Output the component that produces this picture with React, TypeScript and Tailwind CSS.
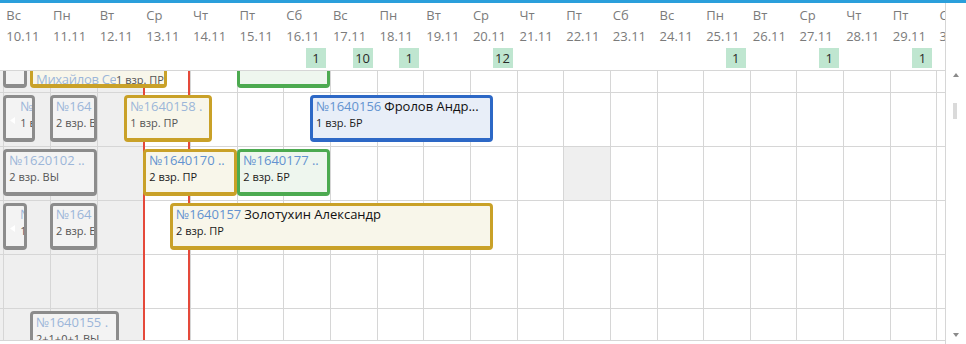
import React from 'react';

const dayNames = ['Вс', 'Пн', 'Вт', 'Ср', 'Чт', 'Пт', 'Сб'];

const columns = Array.from({ length: 21 }, (_, i) => ({
  day: dayNames[i % 7],
  date: `${10 + i}.11`,
}));

const badges: Record<number, string> = { 6: '1', 7: '10', 8: '1', 10: '12', 15: '1', 17: '1', 19: '1' };

const tones = {
  gray: 'border-[#8c8c8c] bg-[#f3f3f3]',
  gold: 'border-[#c9a128] bg-[#f8f6ea]',
  green: 'border-[#4caa50] bg-[#eef6ee]',
  blue: 'border-[#2d68c6] bg-[#e8eef8]',
};

type Booking = {
  row: number;
  left: number;
  width: number;
  tone: keyof typeof tones;
  faded?: boolean;
  num?: string;
  name?: string;
  sub?: string;
  indent?: number;
  arrow?: boolean;
  inline?: boolean;
};

const bookings: Booking[] = [
  { row: 0, left: 3.3, width: 23.4, tone: 'gray', faded: true },
  { row: 0, left: 30, width: 136.7, tone: 'gold', faded: true, num: 'Михайлов Се', sub: '1 взр. ПР', inline: true },
  { row: 0, left: 236.7, width: 93.3, tone: 'green' },
  { row: 1, left: 3.3, width: 31.7, tone: 'gray', faded: true, num: '№', sub: '1 в', indent: 14, arrow: true },
  { row: 1, left: 50, width: 46.7, tone: 'gray', faded: true, num: '№164', sub: '2 взр. В' },
  { row: 1, left: 124.3, width: 88, tone: 'gold', faded: true, num: '№1640158 .', sub: '1 взр. ПР' },
  { row: 1, left: 310, width: 182.7, tone: 'blue', num: '№1640156', name: 'Фролов Андр...', sub: '1 взр. БР' },
  { row: 2, left: 3.3, width: 93.4, tone: 'gray', faded: true, num: '№1620102 ..', sub: '2 взр. ВЫ' },
  { row: 2, left: 143.3, width: 93.4, tone: 'gold', num: '№1640170 ..', sub: '2 взр. ПР' },
  { row: 2, left: 237.3, width: 92.7, tone: 'green', num: '№1640177 ..', sub: '2 взр. БР' },
  { row: 3, left: 3.3, width: 23.4, tone: 'gray', faded: true, num: '№', sub: '1', indent: 14, arrow: true },
  { row: 3, left: 50, width: 46.7, tone: 'gray', faded: true, num: '№164', sub: '2 взр. Е' },
  { row: 3, left: 170, width: 322.7, tone: 'gold', num: '№1640157', name: 'Золотухин Александр', sub: '2 взр. ПР' },
  { row: 5, left: 30, width: 89.3, tone: 'gray', faded: true, num: '№1640155 .', sub: '2+1+0+1 ВЫ' },
];

const Card = ({ b }: { b: Booking }) => {
  const numColor = b.faded ? 'text-[#9cb6d9]' : 'text-[#6393d0]';
  const subColor = b.faded ? 'text-[#555]' : 'text-[#1a1a1a]';
  return (
    <div
      className={`absolute top-[2px] h-[47px] rounded-[4px] border-[3px] border-b-4 overflow-hidden z-10 ${tones[b.tone]}`}
      style={{ left: b.left, width: b.width }}
    >
      {b.arrow && (
        <svg className="absolute left-[4px] top-[19px]" width="5" height="7" viewBox="0 0 5 7">
          <path d="M5 0 L0 3.5 L5 7 Z" fill="#ffffff" />
        </svg>
      )}
      {b.inline ? (
        <div className="absolute bottom-[-4px] left-[3px] whitespace-nowrap leading-[16px] flex items-baseline">
          <span className={`w-[80px] overflow-hidden text-[13px] tracking-[-0.3px] ${numColor}`}>{b.num}</span>
          <span className={`text-[11px] ${subColor}`}>{b.sub}</span>
        </div>
      ) : (
        <div className="whitespace-nowrap" style={{ paddingLeft: b.indent ?? 3 }}>
          <div className="text-[13px] leading-[16px]">
            <span className={numColor}>{b.num}</span>
            {b.name && <span className="text-[#111] ml-[3px]">{b.name}</span>}
          </div>
          <div className={`text-[11px] leading-[16px] mt-[1px] ${subColor}`}>{b.sub}</div>
        </div>
      )}
    </div>
  );
};

const App = () => {
  return (
    <div className="w-[966px] h-[344px] overflow-hidden bg-white font-['Open_Sans',sans-serif]">
      <div className="h-[3px] bg-[#2a9fdb]" />
      <div className="flex h-[341px]">
        {/* Timeline */}
        <div className="w-[945px] shrink-0 overflow-hidden">
          {/* Header */}
          <div className="h-[68px] border-b border-[#d6d6d6] flex pt-[2px]">
            <div className="w-[3.333px] shrink-0" />
            {columns.map((c, i) => (
              <div key={i} className="w-[46.667px] shrink-0 flex flex-col pl-[3px] text-[13px] text-[#7b7b7b]">
                <div className="leading-[20px]">{c.day}</div>
                <div className="leading-[20px] mt-[1px]">{c.date}</div>
                {badges[i] && (
                  <div className="self-end mr-[4px] mt-[2px] w-[20px] h-[20px] bg-[#bfe6d0] text-[#2a2a2a] text-[13px] leading-[20px] text-center">
                    {badges[i]}
                  </div>
                )}
              </div>
            ))}
          </div>

          {/* Body */}
          <div className="relative h-[270px] border-b border-[#d6d6d6] overflow-hidden">
            <div className="-mt-[32px]">
              {[0, 1, 2, 3, 4, 5].map((r) => (
                <div key={r} className="relative flex h-[54px] border-b border-[#d6d6d6]">
                  <div className="w-[3.333px] shrink-0 bg-[#efefef]" />
                  {columns.map((_, i) => (
                    <div
                      key={i}
                      className={`w-[46.667px] shrink-0 border-l border-[#d6d6d6] ${
                        i < 3 || (r === 2 && i === 12) ? 'bg-[#efefef]' : ''
                      }`}
                    />
                  ))}
                  {bookings
                    .filter((b) => b.row === r)
                    .map((b, k) => (
                      <Card key={k} b={b} />
                    ))}
                </div>
              ))}
            </div>
            {/* today / now markers */}
            <div className="absolute top-0 bottom-0 left-[143px] w-[2px] bg-[#e5493a]" />
            <div className="absolute top-0 bottom-0 left-[188px] w-[2px] bg-[#e5493a]" />
          </div>
        </div>

        {/* Scrollbar */}
        <div className="w-[21px] shrink-0 border-l border-[#d6d6d6] relative">
          <svg className="absolute left-[7px] top-[70px]" width="6" height="4" viewBox="0 0 6 4">
            <path d="M0 4 L3 0 L6 4 Z" fill="#8a8a8a" />
          </svg>
          <div className="absolute left-[7px] top-[100px] w-[4px] h-[16px] bg-[#dadada]" />
          <svg className="absolute left-[7px] top-[330px]" width="6" height="4" viewBox="0 0 6 4">
            <path d="M0 0 L6 0 L3 4 Z" fill="#8a8a8a" />
          </svg>
        </div>
      </div>
    </div>
  );
};

export default App;
